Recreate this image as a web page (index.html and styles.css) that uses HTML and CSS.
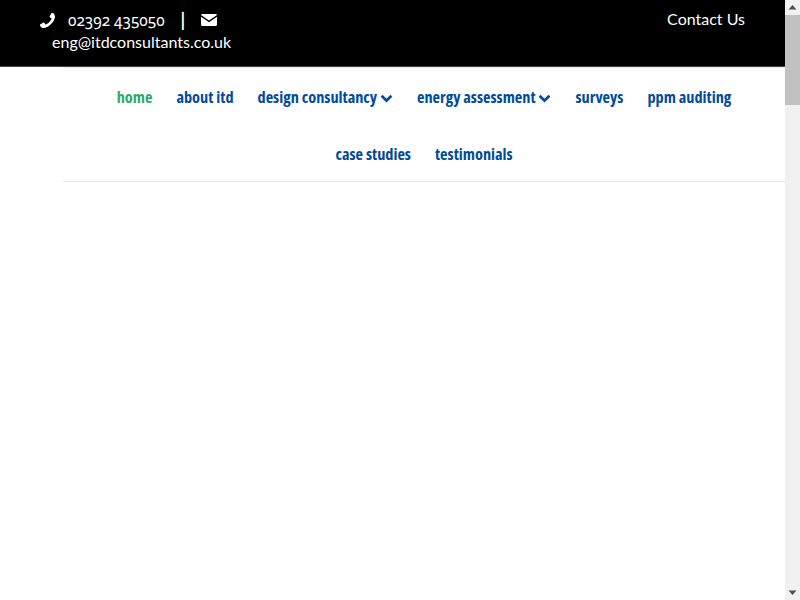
FILE: index.html
```html
<!DOCTYPE html>
<html lang="en">
<head>
<meta charset="utf-8">
<title>ITD Consultants</title>
<link rel="stylesheet" href="styles.css">
</head>
<body>
<div class="page">
  <header class="topbar">
    <div class="contact">
      <div class="contact-line">
        <svg class="icon-phone" viewBox="0 0 1408 1408" aria-hidden="true"><path fill="currentColor" d="M1408 1112q0 27-10 70.500t-21 68.500q-21 50-122 106-94 51-186 51-27 0-53-3.500t-57.500-12.500-47-14.500-55.500-20.500-49-18q-98-35-175-83-127-79-264-216t-216-264q-48-77-83-175-3-9-18-49t-20.500-55.500-14.500-47-12.500-57.500-3.500-53q0-92 51-186 56-101 106-122 25-11 68.500-21t70.500-10q14 0 21 3 18 6 53 76 11 19 30 54t35 63.500 31 53.500q3 4 17.500 25t21.500 35.500 7 28.500q0 20-28.500 50t-62 55-62 53-28.500 46q0 9 5 22.500t8.500 20.500 14 24 11.500 19q76 137 174 235t235 174q2 1 19 11.500t24 14 20.500 8.500 22.500 5q18 0 46-28.500t53-62 55-62 50-28.500q14 0 28.500 7t35.500 21.500 25 17.500q25 15 53.500 31t63.500 35 54 30q70 35 76 53 3 7 3 21z"/></svg>
        <span class="phone">02392 435050</span>
        <span class="divider">|</span>
        <svg class="icon-mail" viewBox="0 0 16 12" aria-hidden="true"><path fill="currentColor" d="M1.400 0h13.200c.7 0 1.300.5 1.400 1.100L8 6.600 0 1.100C.1.500.7 0 1.400 0zM0 2.700l8 5.500 8-5.500v7.800c0 .8-.7 1.500-1.500 1.500h-13C.7 12 0 11.300 0 10.500z"/></svg>
      </div>
      <div class="email">eng@itdconsultants.co.uk</div>
    </div>
    <a class="contact-us" href="#">Contact Us</a>
  </header>
  <nav class="nav">
    <a class="nav-item active" href="#">home</a>
    <a class="nav-item" href="#">about itd</a>
    <a class="nav-item" href="#">design consultancy <svg class="chev" viewBox="0 0 12 8" aria-hidden="true"><path d="M1.500 1.500 6 6l4.500-4.500" fill="none" stroke="currentColor" stroke-width="2.500"/></svg></a>
    <a class="nav-item" href="#">energy assessment <svg class="chev" viewBox="0 0 12 8" aria-hidden="true"><path d="M1.500 1.500 6 6l4.500-4.500" fill="none" stroke="currentColor" stroke-width="2.500"/></svg></a>
    <a class="nav-item" href="#">surveys</a>
    <a class="nav-item" href="#">ppm auditing</a>
    <a class="nav-item" href="#">case studies</a>
    <a class="nav-item" href="#">testimonials</a>
  </nav>
</div>
<aside class="scrollbar" aria-hidden="true">
  <svg class="arrow" viewBox="0 0 15 15"><path d="M3.500 9.500h8L7.500 5z"/></svg>
  <div class="track"><div class="thumb"></div></div>
  <svg class="arrow" viewBox="0 0 15 15"><path d="M3.500 5.500h8l-4 4.500z"/></svg>
</aside>
</body>
</html>
```
FILE: styles.css
```css
html, body {
  margin: 0;
  height: 100%;
  background: #fff;
}
body {
  display: flex;
  height: 600px;
  overflow: hidden;
  font-family: "Lato", "Liberation Sans", sans-serif;
}
.page {
  flex: 1;
  min-width: 0;
}
.topbar {
  box-sizing: border-box;
  height: 67px;
  background: #000;
  color: #fff;
  display: flex;
  justify-content: space-between;
  align-items: flex-start;
  border-bottom: 1px solid #444;
  font-size: 16px;
  padding: 8px 40px 0;
}
.contact {
  width: 205px;
}
.contact-line {
  display: flex;
  align-items: center;
  height: 24px;
}
.icon-phone {
  width: 15px;
  height: 15px;
  margin-right: 13px;
  transform: scaleX(-1);
}
.phone {
  font-family: "Noto Sans", sans-serif;
  font-size: 15.4px;
  font-feature-settings: "onum";
}
.divider {
  margin: 0 16px;
  font-size: 18px;
  font-weight: 700;
  line-height: 22px;
}
.icon-mail {
  width: 16px;
  height: 12px;
}
.email {
  margin-left: 12px;
  line-height: 20px;
  white-space: nowrap;
}
.contact-us {
  color: #fff;
  text-decoration: none;
  line-height: 22px;
}
.nav {
  box-sizing: border-box;
  height: 115px;
  padding-top: 1px;
  border-top: 1px solid #eee;
  border-bottom: 1px solid #e5e5e5;
  margin-left: 63px;
  display: flex;
  flex-wrap: wrap;
  align-content: flex-start;
  justify-content: center;
}
.nav-item {
  font-family: "Open Sans", sans-serif;
  font-stretch: 75%;
  font-weight: 700;
  font-size: 16.3px;
  line-height: 57px;
  height: 57px;
  padding: 0 12px;
  color: #004a9c;
  text-decoration: none;
  white-space: nowrap;
}
.nav-item.active {
  color: #2fa866;
}
.chev {
  width: 13px;
  height: 9px;
}
.scrollbar {
  flex: 0 0 15px;
  display: flex;
  flex-direction: column;
  background: #f1f1f1;
}
.arrow {
  flex: 0 0 15px;
  height: 15px;
  fill: #505050;
}
.track {
  flex: 1;
}
.thumb {
  height: 90px;
  background: #c1c1c1;
}
```
